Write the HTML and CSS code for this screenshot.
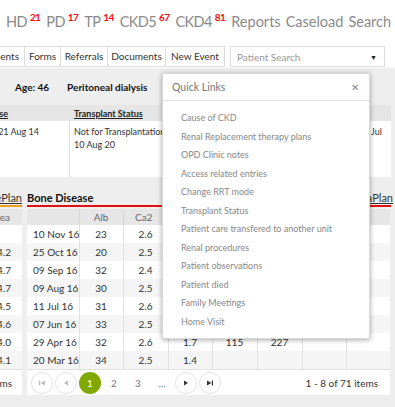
FILE: index.html
```html
<!DOCTYPE html>
<html>
<head>
<meta charset="utf-8">
<link rel="stylesheet" href="styles.css">
</head>
<body>
<div class="page">
  <nav class="topnav">
    <span class="nav-item abbr">HD<sup>21</sup></span>
    <span class="nav-item abbr">PD<sup>17</sup></span>
    <span class="nav-item abbr">TP<sup>14</sup></span>
    <span class="nav-item abbr">CKD5<sup>67</sup></span>
    <span class="nav-item abbr">CKD4<sup>81</sup></span>
    <span class="nav-item">Reports</span>
    <span class="nav-item">Caseload</span>
    <span class="nav-item">Search</span>
  </nav>

  <div class="tabbar">
    <div class="tabs">
      <span class="tab tab-first">Appointments</span>
      <span class="tab tab-forms">Forms</span>
      <span class="tab tab-ref">Referrals</span>
      <span class="tab tab-docs">Documents</span>
      <span class="tab tab-new">New Event</span>
    </div>
    <div class="search-select">
      <span>Patient Search</span>
      <span class="caret">&#9660;</span>
    </div>
  </div>

  <main class="main">
    <div class="patient-line">
      <span class="pl-age">Age: 46</span>
      <span class="pl-mode">Peritoneal dialysis</span>
    </div>

    <section class="summary-card">
      <div class="summary-head">
        <div class="scol scol-1"><span class="ulabel">Primary Disease</span></div>
        <div class="scol scol-2"><span class="ulabel">Transplant Status</span></div>
        <div class="scol scol-3"></div>
        <div class="scol scol-4"></div>
      </div>
      <div class="summary-body">
        <div class="scol scol-1"><span>Glomerulonephritis 21 Aug 14</span></div>
        <div class="scol scol-2">Not for Transplantation<br>10 Aug 20</div>
        <div class="scol scol-3"></div>
        <div class="scol scol-4">Jul</div>
      </div>
    </section>

    <div class="grids">
      <div class="left-col">
        <div class="sec-title orange"><span class="ul">CarePlan</span></div>
        <div class="card left-card">
          <div class="lrow lhead">Urea</div>
          <div class="lrow"></div>
          <div class="lrow alt">4.2</div>
          <div class="lrow">4.7</div>
          <div class="lrow alt">4.7</div>
          <div class="lrow">4.5</div>
          <div class="lrow alt">4.6</div>
          <div class="lrow">4.0</div>
          <div class="lrow alt">4.1</div>
          <div class="lpager">71 items</div>
        </div>
      </div>

      <div class="mid-col">
        <div class="sec-title red">
          <span class="bold">Bone Disease</span>
          <span class="ul right-title">AnaemiaPlan</span>
        </div>
        <div class="card grid-card">
          <table class="grid">
            <colgroup>
              <col class="c-date"><col class="c44"><col class="c45"><col class="c44"><col class="c45"><col class="c45"><col class="c44"><col class="c44">
            </colgroup>
            <thead>
              <tr><th></th><th class="center">Alb</th><th class="right ca">Ca2</th><th></th><th></th><th></th><th></th><th class="left">CG</th></tr>
            </thead>
            <tbody>
              <tr><td class="center">10 Nov 16</td><td class="center">23</td><td class="right ca">2.6</td><td></td><td></td><td></td><td></td><td></td></tr>
              <tr class="alt"><td class="center">25 Oct 16</td><td class="center">20</td><td class="right ca">2.5</td><td></td><td></td><td></td><td></td><td></td></tr>
              <tr><td class="center">09 Sep 16</td><td class="center">32</td><td class="right ca">2.4</td><td></td><td></td><td></td><td></td><td></td></tr>
              <tr class="alt"><td class="center">09 Aug 16</td><td class="center">30</td><td class="right ca">2.5</td><td></td><td></td><td></td><td></td><td></td></tr>
              <tr><td class="center">11 Jul 16</td><td class="center">31</td><td class="right ca">2.6</td><td></td><td></td><td></td><td></td><td></td></tr>
              <tr class="alt"><td class="center">07 Jun 16</td><td class="center">33</td><td class="right ca">2.5</td><td></td><td></td><td></td><td></td><td></td></tr>
              <tr><td class="center">29 Apr 16</td><td class="center">32</td><td class="right ca">2.6</td><td class="center">1.7</td><td class="center">115</td><td class="center">227</td><td></td><td></td></tr>
              <tr class="alt"><td class="center">20 Mar 16</td><td class="center">34</td><td class="right ca">2.5</td><td class="center">1.4</td><td></td><td></td><td></td><td></td></tr>
            </tbody>
          </table>
          <div class="pager">
            <span class="pbtn"><svg width="8" height="8" viewBox="0 0 8 8"><rect x="1" y="1.5" width="1.2" height="5" fill="#bbb"/><path d="M7 1.5 L2.6 4 L7 6.5Z" fill="#bbb"/></svg></span>
            <span class="pbtn"><svg width="8" height="8" viewBox="0 0 8 8"><path d="M6 1.5 L2 4 L6 6.5Z" fill="#bbb"/></svg></span>
            <span class="pnum active">1</span>
            <span class="pnum">2</span>
            <span class="pnum">3</span>
            <span class="pnum">...</span>
            <span class="pbtn"><svg width="8" height="8" viewBox="0 0 8 8"><path d="M2 1.5 L6 4 L2 6.5Z" fill="#333"/></svg></span>
            <span class="pbtn"><svg width="8" height="8" viewBox="0 0 8 8"><path d="M1 1.5 L5.4 4 L1 6.5Z" fill="#333"/><rect x="5.8" y="1.5" width="1.2" height="5" fill="#333"/></svg></span>
            <span class="pinfo">1 - 8 of 71 items</span>
          </div>
        </div>
      </div>
    </div>
  </main>

  <div class="quick-links">
    <div class="ql-head">
      <span>Quick Links</span>
      <span class="ql-close">&#x2715;</span>
    </div>
    <ul class="ql-list">
      <li>Cause of CKD</li>
      <li>Renal Replacement therapy plans</li>
      <li>OPD Clinic notes</li>
      <li>Access related entries</li>
      <li>Change RRT mode</li>
      <li>Transplant Status</li>
      <li>Patient care transfered to another unit</li>
      <li>Renal procedures</li>
      <li>Patient observations</li>
      <li>Patient died</li>
      <li>Family Meetings</li>
      <li>Home Visit</li>
    </ul>
  </div>
</div>
</body>
</html>
```

FILE: styles.css
```css
* { box-sizing: border-box; }
html, body { margin: 0; padding: 0; }
body {
  font-family: Lato, "Open Sans", sans-serif;
  background: #eeeeee;
  color: #333;
  width: 395px;
  height: 407px;
  overflow: hidden;
}
.page { position: relative; width: 395px; height: 407px; overflow: hidden; }

.topnav {
  background: #fff;
  height: 40px;
  display: flex;
  align-items: center;
  gap: 6px;
  padding-left: 6px;
  padding-top: 3px;
  font-size: 14.5px;
  color: #8a8a8a;
  white-space: nowrap;
}
.nav-item { margin-right: -1px; }
.nav-item.abbr { letter-spacing: -0.6px; margin-right: 0; }
.nav-item sup {
  color: #f01010;
  font-size: 10px;
  font-weight: 700;
  margin-left: 3px;
  vertical-align: 6px;
  line-height: 0;
}

.tabbar {
  background: #fff;
  height: 28px;
  padding-top: 6px;
  display: flex;
  align-items: flex-start;
  white-space: nowrap;
}
.tabs {
  display: flex;
  justify-content: flex-end;
  width: 225px;
  overflow: hidden;
  flex-shrink: 0;
}
.tab {
  flex-shrink: 0;
  height: 21px;
  border: 1px solid #ddd;
  border-left: none;
  font-size: 10px;
  line-height: 19px;
  color: #333;
  background: #fff;
  text-align: center;
}
.tab-first { width: 70px; padding-right: 5px; text-align: right; }
.tab-forms { width: 36px; }
.tab-ref { width: 47px; }
.tab-docs { width: 58px; }
.tab-new { width: 59px; }
.search-select {
  margin-left: 5px;
  width: 155px;
  height: 21px;
  border: 1px solid #ddd;
  display: flex;
  justify-content: space-between;
  align-items: center;
  padding: 0 7px 0 6px;
  font-size: 10px;
  color: #999;
}
.caret { color: #222; font-size: 7px; }

.patient-line {
  height: 37px;
  display: flex;
  align-items: center;
  gap: 18px;
  padding-left: 15px;
  font-size: 10px;
  font-weight: 700;
  color: #111;
}

.summary-card {
  width: 391px;
  background: #fff;
}
.summary-head, .summary-body { display: flex; }
.summary-head { background: #e5e5e5; height: 16px; align-items: center; }
.summary-body { height: 56px; }
.scol { font-size: 9px; overflow: hidden; white-space: nowrap; }
.scol-1 { width: 70px; display: flex; justify-content: flex-end; }
.summary-head .scol-1 { padding-right: 62px; }
.summary-body .scol-1 { padding-right: 30px; border-right: 1px solid #ddd; }
.scol-2 { width: 120px; padding-left: 4px; }
.scol-3 { flex: 1; }
.scol-4 { width: 20px; }
.summary-body .scol { padding-top: 4px; line-height: 13px; color: #333; }
.ulabel { font-weight: 700; text-decoration: underline; color: #222; }

.grids {
  display: flex;
  gap: 5px;
  margin-top: 13px;
}
.left-col { width: 22px; overflow: hidden; display: flex; flex-direction: column; align-items: flex-end; }
.mid-col { width: 363px; }

.sec-title {
  height: 17px;
  font-size: 11px;
  display: flex;
  align-items: center;
  justify-content: space-between;
  white-space: nowrap;
}
.sec-title.orange { border-bottom: 2px solid #f0a020; width: 60px; justify-content: flex-end; flex-shrink: 0; }
.sec-title.red { border-bottom: 2px solid #e01010; margin-right: -1px; }
.sec-title .bold { font-weight: 700; color: #111; }
.sec-title .ul { text-decoration: underline; color: #333; }
.right-title { margin-right: -2px; }

.card { background: #fff; margin-top: 2px; }
.left-card { width: 60px; flex-shrink: 0; }
.lrow {
  height: 18px;
  font-size: 10px;
  line-height: 18px;
  text-align: right;
  padding-right: 11px;
  color: #333;
  white-space: nowrap;
}
.lrow.alt { background: #f5f5f5; }
.lrow.lhead { height: 16px; line-height: 16px; background: #e6e6e6; color: #666; padding-right: 12px; }
.lpager { height: 26px; line-height: 26px; font-size: 10px; text-align: right; padding-right: 10px; border-top: 1px solid #e0e0e0; white-space: nowrap; }

.grid { border-collapse: collapse; table-layout: fixed; width: 363px; font-size: 10px; }
.c-date { width: 52px; }
.c44 { width: 44px; }
.c45 { width: 45px; }
.grid th {
  height: 16px;
  background: #e6e6e6;
  color: #666;
  font-weight: 400;
  border-left: 1px solid #d6d6d6;
  padding: 0 6px;
}
.grid th:first-child { border-left: none; }
.grid td {
  height: 18px;
  padding: 0 6px;
  border-left: 1px solid #e2e2e2;
  color: #333;
  white-space: nowrap;
}
.grid td:first-child { border-left: none; }
.grid tr.alt td { background: #f5f5f5; }
.grid .ca { padding-right: 15px; }
.center { text-align: center; }
.right { text-align: right; }
.left { text-align: left; }

.pager {
  height: 26px;
  display: flex;
  align-items: center;
  padding-left: 4px;
  padding-right: 12px;
  border-top: 1px solid #e0e0e0;
  font-size: 10px;
  color: #555;
}
.pbtn {
  width: 22px; height: 22px;
  border: 1px solid #e2e2e2;
  border-radius: 50%;
  display: inline-flex; align-items: center; justify-content: center;
  margin-right: 2px;
}
.pnum {
  width: 22px; height: 22px;
  display: inline-flex; align-items: center; justify-content: center;
  margin-right: 2px;
  color: #777;
}
.pnum.active { background: #7fa800; color: #fff; border-radius: 50%; }
.pinfo { margin-left: auto; color: #333; }

.quick-links {
  position: absolute;
  left: 162px;
  top: 73px;
  width: 208px;
  height: 266px;
  background: #fff;
  border: 1px solid #d8d8d8;
  box-shadow: 0 1px 5px rgba(0,0,0,0.35);
}
.ql-head {
  height: 27px;
  border-bottom: 1px solid #e2e2e2;
  display: flex;
  align-items: center;
  justify-content: space-between;
  padding: 0 10px 0 9px;
  font-size: 10.5px;
  color: #777;
}
.ql-close { font-size: 10px; color: #888; }
.ql-list {
  list-style: none;
  margin: 0;
  padding: 8px 0 0 18px;
  font-size: 9px;
  color: #888;
}
.ql-list li { height: 18.5px; line-height: 18.5px; white-space: nowrap; }
```
